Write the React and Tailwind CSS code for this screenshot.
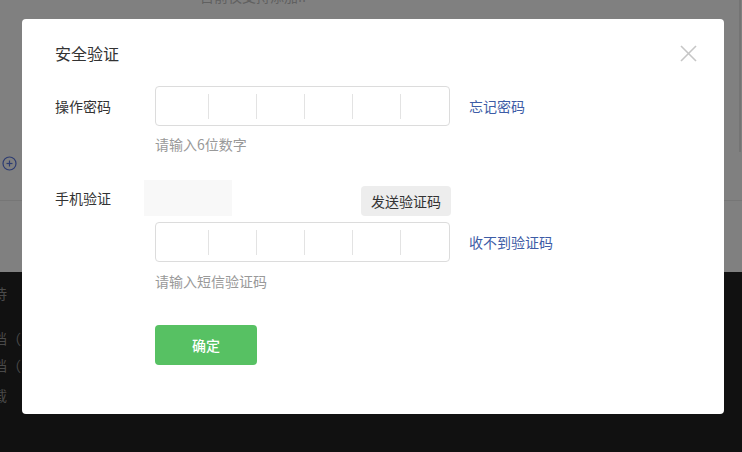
import React from "react";

const CodeBox = () => {
  const cells = [0, 1, 2, 3, 4, 5];
  return (
    <div className="flex h-[40px] w-[295px] items-center rounded-[4px] border border-[#dcdcdc] bg-white pl-[4px]">
      {cells.map((i) => (
        <div key={i} className="flex h-[25px] w-[48px] items-center">
          {i > 0 && <div className="h-full w-px bg-[#e3e3e3]" />}
        </div>
      ))}
    </div>
  );
};

const CloseIcon = () => (
  <svg width="17" height="17" viewBox="0 0 17 17" className="block">
    <line x1="1" y1="1" x2="16" y2="16" stroke="#c6c6c6" strokeWidth="1.6" />
    <line x1="16" y1="1" x2="1" y2="16" stroke="#c6c6c6" strokeWidth="1.6" />
  </svg>
);

export default function App() {
  return (
    <div className="relative h-[452px] w-[742px] overflow-hidden bg-[#111111] font-['Noto_Sans_CJK_SC','Noto_Sans',sans-serif]">
      {/* page behind the mask */}
      <div className="relative h-[272px] bg-[#808080]">
        <div className="absolute left-[200px] top-[-14px] text-[14px] leading-[20px] text-[#606060]">
          目前仅支持添加IP
        </div>
        <div className="absolute left-[2px] top-[156px]">
          <svg width="15" height="15" viewBox="0 0 15 15">
            <circle cx="7.5" cy="7.5" r="6.5" fill="none" stroke="#2d3c72" strokeWidth="1.2" />
            <line x1="4.5" y1="7.5" x2="10.5" y2="7.5" stroke="#2d3c72" strokeWidth="1.2" />
            <line x1="7.5" y1="4.5" x2="7.5" y2="10.5" stroke="#2d3c72" strokeWidth="1.2" />
          </svg>
        </div>
        <div className="absolute left-0 right-0 top-[200px] h-px bg-[#767676]" />
        <div className="absolute right-[1px] top-0 h-[152px] w-[2px] bg-[#747474]" />
      </div>
      <div className="flex flex-col pt-[11px] text-[14px] leading-[20px] text-[#4a4a4a]">
        <div className="-ml-[7px]">待</div>
        <div className="-ml-[7px] mt-[25px]">档（</div>
        <div className="-ml-[7px] mt-[7px]">档（</div>
        <div className="-ml-[7px] mt-[10px]">载</div>
      </div>

      {/* dialog */}
      <div className="absolute left-[22px] top-[19px] h-[395px] w-[702px] rounded-[4px] bg-white pl-[33px] pr-[27px] pt-[22px]">
        <div className="flex items-center justify-between">
          <div className="text-[16px] leading-[24px] text-[#333333]">安全验证</div>
          <CloseIcon />
        </div>

        <div className="mt-[21px] flex items-center">
          <div className="w-[100px] text-[14px] text-[#333333]">操作密码</div>
          <CodeBox />
          <a className="ml-[19px] text-[14px] text-[#3d5ca6]">忘记密码</a>
        </div>
        <div className="ml-[100px] mt-[8px] text-[14px] leading-[20px] text-[#999999]">请输入6位数字</div>

        <div className="mt-[26px] flex h-[36px] items-center">
          <div className="w-[100px] text-[14px] text-[#333333]">手机验证</div>
          <div className="flex w-[296px] items-center justify-between">
            <div className="-ml-[11px] h-[36px] w-[88px] bg-[#f8f8f8]" />
            <button className="mt-[6px] h-[30px] w-[90px] rounded-[4px] bg-[#ededed] text-[14px] text-[#333333]">
              发送验证码
            </button>
          </div>
        </div>

        <div className="mt-[6px] flex items-center">
          <div className="w-[100px]" />
          <CodeBox />
          <a className="ml-[19px] text-[14px] text-[#3d5ca6]">收不到验证码</a>
        </div>
        <div className="ml-[100px] mt-[9px] text-[14px] leading-[20px] text-[#999999]">请输入短信验证码</div>

        <div className="ml-[100px] mt-[34px]">
          <button className="h-[40px] w-[102px] rounded-[4px] bg-[#57c163] text-[14px] font-medium text-white">
            确定
          </button>
        </div>
      </div>
    </div>
  );
}
